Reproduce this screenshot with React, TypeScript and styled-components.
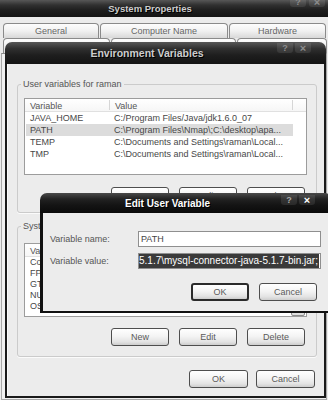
import React from "react";
import styled, { createGlobalStyle } from "styled-components";

const GlobalStyle = createGlobalStyle`
  html, body {
    margin: 0;
    padding: 0;
    background: #e9e9e9;
  }
  body {
    width: 328px;
    height: 400px;
    overflow: hidden;
    font-family: "Liberation Sans", Arial, sans-serif;
    font-size: 9px;
    color: #444;
  }
`;

type Variable = { name: string; value: string; selected?: boolean };

const userVars: Variable[] = [
  { name: "JAVA_HOME", value: "C:/Program Files/Java/jdk1.6.0_07" },
  { name: "PATH", value: "C:\\Program Files\\Nmap\\;C:\\desktop\\apa...", selected: true },
  { name: "TEMP", value: "C:\\Documents and Settings\\raman\\Local..." },
  { name: "TMP", value: "C:\\Documents and Settings\\raman\\Local..." },
];

const systemVars: Variable[] = [
  { name: "ComSpec", value: "C:\\WINDOWS\\system32\\cmd.exe" },
  { name: "FP_NO_HOST_CHECK", value: "NO" },
  { name: "GTK_BASEPATH", value: "C:\\Program Files\\GTK2-Runtime" },
  { name: "NUMBER_OF_PROCESSORS", value: "2" },
  { name: "OS", value: "Windows_NT" },
];

type CaptionProps = {
  title: string;
  size: number;
  pad: number;
  height: number;
  active?: boolean;
  rounded?: boolean;
  capTop: number;
  capRight: number;
  capGap: number;
};

const Caption: React.FC<CaptionProps> = ({ title, size, pad, height, active, rounded, capTop, capRight, capGap }) => (
  <TitleBar $height={height} $active={active} $rounded={rounded}>
    <TitleText $size={size} $pad={pad} $active={active}>
      {title}
    </TitleText>
    <CapButtons $top={capTop} $right={capRight} $gap={capGap}>
      <CapButton $active={active}>?</CapButton>
      <CapButton $active={active} $close>
        ×
      </CapButton>
    </CapButtons>
  </TitleBar>
);

const VarList: React.FC<{ rows: Variable[]; height: number; rowHeight: number; scroll?: boolean }> = ({
  rows,
  height,
  rowHeight,
  scroll,
}) => (
  <ListView $h={height}>
    <ListTable>
      <HeaderRow>
        <HeaderCell $w={85}>Variable</HeaderCell>
        <HeaderCell $w={183}>Value</HeaderCell>
      </HeaderRow>
      {rows.map((r) => (
        <Row key={r.name} $selected={!!r.selected} $h={rowHeight}>
          <Cell $w={84}>{r.name}</Cell>
          <Cell $w={183}>{r.value}</Cell>
        </Row>
      ))}
    </ListTable>
    {scroll && (
      <ScrollBar>
        <ScrollTrack />
        <ScrollArrow>
          <svg width="7" height="5" viewBox="0 0 7 5">
            <path d="M0.5 0.8 L3.5 3.8 L6.5 0.8" fill="none" stroke="#555" strokeWidth="1.3" />
          </svg>
        </ScrollArrow>
      </ScrollBar>
    )}
  </ListView>
);

const App: React.FC = () => {
  return (
    <>
      <GlobalStyle />
      <Desktop>
        <SysWindow>
          <Caption
            title="System Properties"
            size={9.5}
            pad={10}
            height={17}
            capTop={-3}
            capRight={3}
            capGap={3}
          />
          <SysBody>
            <TabStrip $top={6}>
              <Tab $w={96}>General</Tab>
              <Tab $w={128}>Computer Name</Tab>
              <Tab $w={97}>Hardware</Tab>
            </TabStrip>
            <TabStrip $top={0}>
              <Tab $w={107}>Advanced</Tab>
              <Tab $w={125}>System Restore</Tab>
              <Tab $w={90}>Automatic Updates</Tab>
            </TabStrip>
            <TabPage />
          </SysBody>
        </SysWindow>

        <EnvWindow>
          <Caption
            title="Environment Variables"
            size={10.5}
            pad={12}
            height={22}
            rounded
            capTop={1}
            capRight={15}
            capGap={2}
          />
          <EnvBody>
            <GroupBox $mt={15} $pt={8} $pb={7}>
              <Legend>User variables for raman</Legend>
              <VarList rows={userVars} height={77} rowHeight={12} />
              <ButtonRow $mt={12} $mr={2} $gap={10}>
                <XpButton $w={58}>New</XpButton>
                <XpButton $w={58}>Edit</XpButton>
                <XpButton $w={58}>Delete</XpButton>
              </ButtonRow>
            </GroupBox>
            <GroupBox $mt={8} $pt={11} $pb={10}>
              <Legend>System variables</Legend>
              <VarList rows={systemVars} height={74} rowHeight={11} scroll />
              <ButtonRow $mt={11} $mr={2} $gap={10}>
                <XpButton $w={58}>New</XpButton>
                <XpButton $w={58}>Edit</XpButton>
                <XpButton $w={58}>Delete</XpButton>
              </ButtonRow>
            </GroupBox>
            <ButtonRow $mt={13} $mr={9} $gap={8}>
              <XpButton $w={59}>OK</XpButton>
              <XpButton $w={59}>Cancel</XpButton>
            </ButtonRow>
          </EnvBody>
        </EnvWindow>

        <EditWindow>
          <Caption
            title="Edit User Variable"
            size={10}
            pad={14}
            height={20}
            active
            rounded
            capTop={2}
            capRight={17}
            capGap={2}
          />
          <EditBody>
            <Form>
              <FieldRow>
                <FieldLabel>Variable name:</FieldLabel>
                <TextBox>PATH</TextBox>
              </FieldRow>
              <FieldRow>
                <FieldLabel>Variable value:</FieldLabel>
                <TextBox $flush>
                  <Selection>5.1.7\mysql-connector-java-5.1.7-bin.jar;</Selection>
                </TextBox>
              </FieldRow>
              <ButtonRow $mt={8} $mr={4} $gap={10}>
                <XpButton $w={58} $default>
                  OK
                </XpButton>
                <XpButton $w={58}>Cancel</XpButton>
              </ButtonRow>
            </Form>
          </EditBody>
        </EditWindow>
      </Desktop>
    </>
  );
};

const Desktop = styled.div`
  position: relative;
  width: 328px;
  height: 400px;
  overflow: hidden;
  background: #e9e9e9;
`;

const SysWindow = styled.div`
  display: flex;
  flex-direction: column;
  height: 400px;
`;

const SysBody = styled.div`
  flex: 1;
  display: flex;
  flex-direction: column;
  background: #ebebeb;
`;

const TabStrip = styled.div<{ $top: number }>`
  display: flex;
  gap: 1px;
  margin-top: ${(p) => p.$top}px;
  padding-left: 3px;
  height: 15px;
  flex-shrink: 0;
`;

const Tab = styled.div<{ $w: number }>`
  width: ${(p) => p.$w}px;
  flex-shrink: 0;
  box-sizing: border-box;
  border: 1px solid #8a8a8a;
  border-bottom: none;
  border-radius: 4px 4px 0 0;
  background: linear-gradient(#fdfdfd, #f1f1f1 50%, #d8d8d8);
  text-align: center;
  line-height: 14px;
  color: #666;
  white-space: nowrap;
  overflow: hidden;
`;

const TabPage = styled.div`
  flex: 1;
  margin: 0 1px 0 1px;
  border: 1px solid #a8a8a8;
  border-top-color: #8a8a8a;
  background: #f0f0f0;
`;

const TitleBar = styled.div<{ $height: number; $active?: boolean; $rounded?: boolean }>`
  display: flex;
  align-items: center;
  height: ${(p) => p.$height}px;
  flex-shrink: 0;
  overflow: hidden;
  border-radius: ${(p) => (p.$rounded ? "7px 7px 0 0" : "0")};
  background: ${(p) =>
    p.$active
      ? "linear-gradient(#4a4a4a, #222 30%, #141414 60%, #0a0a0a)"
      : "linear-gradient(#575757, #303030 30%, #1e1e1e 60%, #141414)"};
`;

const TitleText = styled.div<{ $size: number; $pad: number; $active?: boolean }>`
  flex: 1;
  text-align: center;
  padding-left: ${(p) => p.$pad}px;
  font-size: ${(p) => p.$size}px;
  font-weight: bold;
  white-space: nowrap;
  color: ${(p) => (p.$active ? "#ffffff" : "#cdcdcd")};
  text-shadow: 1px 1px 0 #000;
`;

const CapButtons = styled.div<{ $top: number; $right: number; $gap: number }>`
  display: flex;
  gap: ${(p) => p.$gap}px;
  align-self: flex-start;
  margin-top: ${(p) => p.$top}px;
  margin-right: ${(p) => p.$right}px;
`;

const CapButton = styled.span<{ $active?: boolean; $close?: boolean }>`
  width: 16px;
  height: 10px;
  display: flex;
  align-items: center;
  justify-content: center;
  border-radius: 0 0 3px 3px;
  background: rgba(255, 255, 255, 0.09);
  font-size: ${(p) => (p.$close ? 11 : 9)}px;
  font-weight: bold;
  line-height: 1;
  color: ${(p) => (p.$active ? (p.$close ? "#ffffff" : "#a8a8a8") : "#8c8c8c")};
`;

const EnvWindow = styled.div`
  position: absolute;
  left: 5px;
  top: 42px;
  width: 321px;
  height: 356px;
  display: flex;
  flex-direction: column;
`;

const EnvBody = styled.div`
  flex: 1;
  display: flex;
  flex-direction: column;
  background: #ececec;
  border: 2px solid #1a1a1a;
  border-top: none;
  box-shadow: inset 1px 0 0 #fafafa;
`;

const GroupBox = styled.fieldset<{ $mt: number; $pt: number; $pb: number }>`
  display: flex;
  flex-direction: column;
  margin: ${(p) => p.$mt}px 7px 0 10px;
  padding: ${(p) => p.$pt}px 9px ${(p) => p.$pb}px 6px;
  border: 1px solid #cbcbcb;
  border-radius: 3px;
  min-width: 0;
  box-shadow: 0 1px 0 #fbfbfb;
`;

const Legend = styled.legend`
  padding: 0 2px;
  margin-left: -3px;
  line-height: 11px;
  font-size: 9px;
  color: #555;
`;

const ListView = styled.div<{ $h: number }>`
  display: flex;
  height: ${(p) => p.$h}px;
  box-sizing: border-box;
  background: #ffffff;
  border: 1px solid #9c9c9c;
  overflow: hidden;
`;

const ListTable = styled.div`
  flex: 1;
  display: flex;
  flex-direction: column;
  min-width: 0;
`;

const HeaderRow = styled.div`
  display: flex;
  height: 13px;
  flex-shrink: 0;
  box-sizing: border-box;
  border-bottom: 1px solid #e0e0e0;
  background: linear-gradient(#ffffff, #f6f6f6);
`;

const HeaderCell = styled.div<{ $w: number }>`
  width: ${(p) => p.$w}px;
  flex-shrink: 0;
  box-sizing: border-box;
  padding-left: 5px;
  line-height: 12px;
  color: #555;
  border-right: 1px solid #d6d6d6;
  margin: 1px 0;
`;

const Row = styled.div<{ $selected: boolean; $h: number }>`
  display: flex;
  width: 267px;
  height: ${(p) => p.$h}px;
  margin-left: 1px;
  flex-shrink: 0;
  line-height: ${(p) => p.$h}px;
  background: ${(p) => (p.$selected ? "#dcdcdc" : "transparent")};
`;

const Cell = styled.div<{ $w: number }>`
  width: ${(p) => p.$w}px;
  flex-shrink: 0;
  box-sizing: border-box;
  padding-left: 4px;
  white-space: nowrap;
  overflow: hidden;
  color: #474747;
`;

const ScrollBar = styled.div`
  width: 14px;
  display: flex;
  flex-direction: column;
  margin-right: 1px;
  background: #f4f4f4;
`;

const ScrollTrack = styled.div`
  flex: 1;
`;

const ScrollArrow = styled.div`
  height: 14px;
  display: flex;
  align-items: center;
  justify-content: center;
  box-sizing: border-box;
  border: 1px solid #8d8d8d;
  border-radius: 2px;
  background: linear-gradient(#fdfdfd, #dcdcdc);
`;

const ButtonRow = styled.div<{ $mt: number; $mr: number; $gap: number }>`
  display: flex;
  justify-content: flex-end;
  gap: ${(p) => p.$gap}px;
  margin-top: ${(p) => p.$mt}px;
  margin-right: ${(p) => p.$mr}px;
`;

const XpButton = styled.button<{ $w: number; $default?: boolean }>`
  width: ${(p) => p.$w}px;
  height: 18px;
  box-sizing: border-box;
  padding: 0;
  border: ${(p) => (p.$default ? "2px solid #2b2b2b" : "1px solid #4e4e4e")};
  border-radius: 3px;
  background: linear-gradient(#ffffff, #f4f4f4 45%, #e3e3e3 80%, #cdcdcd);
  font-family: "Liberation Sans", Arial, sans-serif;
  font-size: 9px;
  color: #5a5a5a;
`;

const EditWindow = styled.div`
  position: absolute;
  left: 40px;
  top: 193px;
  width: 292px;
  height: 120px;
  display: flex;
  flex-direction: column;
`;

const EditBody = styled.div`
  flex: 1;
  background: #ececec;
  border-left: 3px solid #111;
  border-bottom: 2px solid #111;
  padding: 18px 0 0 7px;
`;

const Form = styled.div`
  width: 271px;
  display: flex;
  flex-direction: column;
`;

const FieldRow = styled.div`
  display: flex;
  align-items: center;
  height: 16px;
  margin-bottom: 6px;
`;

const FieldLabel = styled.div`
  width: 88px;
  flex-shrink: 0;
  color: #555;
  white-space: nowrap;
`;

const TextBox = styled.div<{ $flush?: boolean }>`
  width: 183px;
  height: 16px;
  box-sizing: border-box;
  border: 1px solid #8f8f8f;
  background: #fff;
  padding-left: ${(p) => (p.$flush ? 0 : 2)}px;
  line-height: 14px;
  white-space: nowrap;
  overflow: hidden;
  color: #444;
`;

const Selection = styled.span`
  display: inline-block;
  height: 14px;
  padding-right: 1px;
  background: #3a3a3a;
  color: #fff;
  font-size: 10px;
  line-height: 14px;
`;

export default App;
